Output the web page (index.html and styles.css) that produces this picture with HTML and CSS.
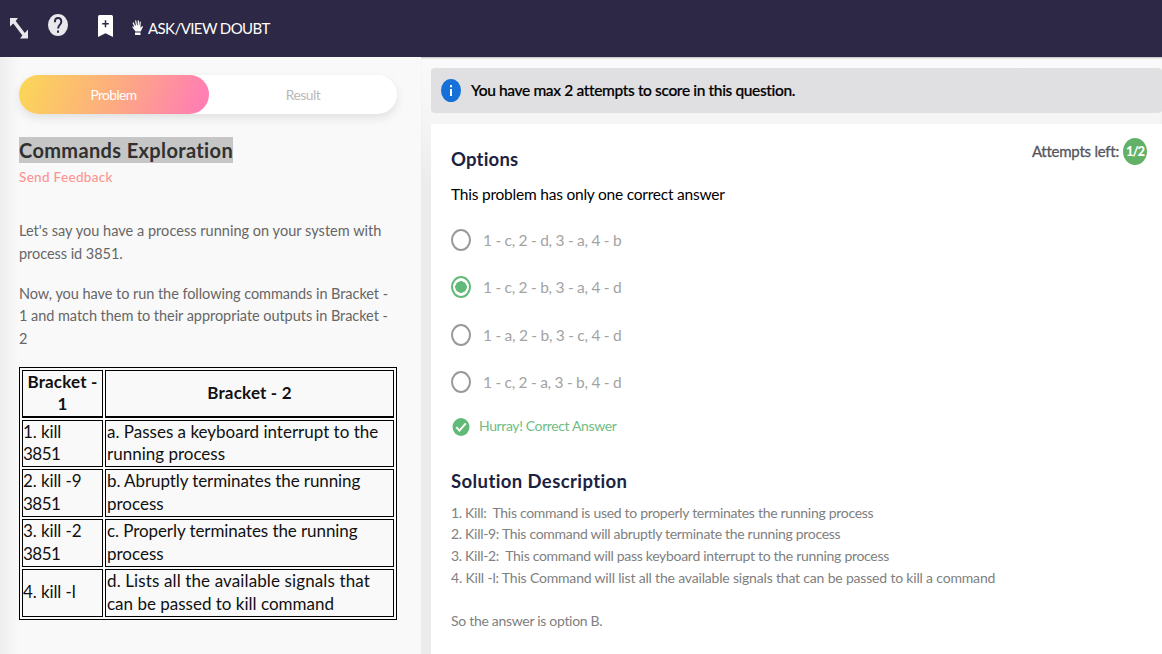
FILE: index.html
```
<!DOCTYPE html>
<html lang="en">
<head>
<meta charset="utf-8">
<title>Commands Exploration</title>
<link rel="stylesheet" href="styles.css">
</head>
<body>
<header class="topbar">
  <svg class="icon-resize" viewBox="0 0 18 21"><path d="M0 0h8L5.700 3 14.800 14.900 18 11.500v9h-8l2.400-3L3.300 5.600 0 8.500z" fill="#e9e8ed"/></svg>
  <svg class="icon-help" viewBox="0 0 20 22"><ellipse cx="10" cy="11" rx="10" ry="11" fill="#e9e8ed"/><path d="M6.900 8.200C6.900 5.500 8.200 4.100 10 4.100s3.300 1.500 3.300 3.700c0 2.900-3.200 3.400-3.200 6.600" fill="none" stroke="#2c2845" stroke-width="2"/><path d="M9 16.500h2v2.200H9z" fill="#2c2845"/></svg>
  <svg class="icon-bookmark" viewBox="0 0 15 22"><path d="M1.500 0h12Q15 0 15 1.700V22l-7.500-3.700L0 22V1.700Q0 0 1.500 0z" fill="#fff"/><path d="M7.500 5.200v7M4.200 8.700h6.600" stroke="#2c2845" stroke-width="1.500"/></svg>
  <svg class="icon-hand" viewBox="0 0 11 15"><path d="M3 7L1.300 3M4.700 6.500L3.700 1M6.300 6.500V.8M7.700 7.500l.5-5.300" stroke="#fff" stroke-width="1.250" stroke-linecap="round"/><path d="M2.300 5.500l6-.2v2.700l2-2 .7.800-2.300 4.700H3.500L.2 7l.7-.8 1.700 1.300zM3 12.400h5.500V15H3z" fill="#fff"/></svg>
  <span class="doubt">ASK/VIEW DOUBT</span>
</header>
<main class="workspace">
  <section class="problem">
    <nav class="tabs">
      <div class="tab tab-active">Problem</div>
      <div class="tab">Result</div>
    </nav>
    <h1 class="title"><span class="selected">Commands Exploration</span></h1>
    <a class="feedback">Send Feedback</a>
    <p class="statement"><span class="lead">Let's say you have a process running on your system with</span><br>process id 3851.</p>
    <p class="statement">Now, you have to run the following commands in Bracket -<br>1 and match them to their appropriate outputs in Bracket -<br>2</p>
    <table class="brackets">
      <tr><th class="col-key">Bracket -<br>1</th><th>Bracket - 2</th></tr>
      <tr class="short"><td class="key">1. kill<br><span class="pid">3851</span></td><td>a. Passes a keyboard interrupt to the<br>running process</td></tr>
      <tr><td class="key">2. kill -9<br><span class="pid">3851</span></td><td><span class="snug">b. Abruptly terminates the running</span><br>process</td></tr>
      <tr><td class="key">3. kill -2<br><span class="pid">3851</span></td><td><span class="snug">c. Properly terminates the running</span><br>process</td></tr>
      <tr><td class="key">4. kill -l</td><td><span class="loose">d. Lists all the available signals that</span><br>can be passed to kill command</td></tr>
    </table>
  </section>
  <section class="answer">
    <div class="notice">
      <svg class="icon-info" viewBox="0 0 20 23"><ellipse cx="10" cy="11.500" rx="10" ry="11.500" fill="#1570d8"/><path d="M9 6h2v2.300H9zM9 10h2v7H9z" fill="#fff"/></svg>
      <span class="notice-text">You have max 2 attempts to score in this question.</span>
    </div>
    <div class="card">
      <div class="card-head">
        <h2 class="heading">Options</h2>
        <div class="attempts"><span class="attempts-label">Attempts left:</span><span class="badge">1/2</span></div>
      </div>
      <p class="hint">This problem has only one correct answer</p>
      <ul class="options">
        <li class="option"><span class="radio"></span><span>1 - c, 2 - d, 3 - a, 4 - b</span></li>
        <li class="option"><span class="radio radio-on"></span><span>1 - c, 2 - b, 3 - a, 4 - d</span></li>
        <li class="option"><span class="radio"></span><span>1 - a, 2 - b, 3 - c, 4 - d</span></li>
        <li class="option"><span class="radio"></span><span>1 - c, 2 - a, 3 - b, 4 - d</span></li>
      </ul>
      <div class="verdict">
        <svg class="icon-check" viewBox="0 0 18 18"><ellipse cx="9" cy="9" rx="8.500" ry="9" fill="#62ba78"/><path d="M4.300 9.200l3.100 3.400 6.400-7.200" fill="none" stroke="#fff" stroke-width="1.900"/></svg>
        <span class="verdict-text">Hurray! Correct Answer</span>
      </div>
      <h2 class="heading heading-solution">Solution Description</h2>
      <div class="solution">
        <div>1. Kill:&nbsp; This command is used to properly terminates the running process</div>
        <div>2. Kill-9: This command will abruptly terminate the running process</div>
        <div>3. Kill-2:&nbsp; This command will pass keyboard interrupt to the running process</div>
        <div class="wide">4. Kill -l: This Command will list all the available signals that can be passed to kill a command</div>
        <div class="conclusion">So the answer is option B.</div>
      </div>
    </div>
  </section>
</main>
</body>
</html>
```
FILE: styles.css
```
* { box-sizing: border-box; }
body {
  margin: 0;
  height: 654px;
  overflow: hidden;
  display: flex;
  flex-direction: column;
  font-family: Lato, "Open Sans", sans-serif;
  background: #f9f9f9;
}
h1, h2, p, ul { margin: 0; padding: 0; }
svg { display: block; flex: none; }

.topbar {
  height: 57px;
  flex: none;
  display: flex;
  align-items: flex-start;
  padding-left: 10px;
  background: #2c2845;
}
.icon-resize { width: 18px; height: 21px; margin-top: 18px; }
.icon-help { width: 20px; height: 22px; margin: 14px 0 0 20px; }
.icon-bookmark { width: 15px; height: 22px; margin: 15px 0 0 30px; }
.icon-hand { width: 11px; height: 15px; margin: 20px 0 0 19px; }
.doubt { margin: 18px 0 0 5px; font-size: 15px; line-height: 20px; letter-spacing: -.6px; color: #fff; white-space: nowrap; }

.workspace { flex: 1; display: flex; min-height: 0; }
.problem {
  width: 421px;
  flex: none;
  padding: 18px 24px 0 19px;
  background: linear-gradient(90deg, #eeeeee 0, #f9f9f9 19px);
}
.tabs {
  display: flex;
  height: 39px;
  border-radius: 20px;
  background: #fff;
  box-shadow: 0 4px 10px rgba(0, 0, 0, .1);
}
.tab {
  width: 188px;
  text-align: center;
  font-size: 13.800px;
  line-height: 40px;
  letter-spacing: -.45px;
  color: #b9b9b9;
}
.tab-active {
  width: 190px;
  padding-right: 1px;
  color: #fff;
  letter-spacing: -.6px;
  border-radius: 20px;
  background: linear-gradient(110deg, #fbd856 0%, #fdac80 50%, #ff7fb2 94%);
}
.title { margin-top: 23px; height: 26px; font-size: 20px; line-height: 26px; letter-spacing: .36px; color: #303030; }
.selected { display: inline-block; width: 214px; height: 26px; background: #c6c6c6; white-space: nowrap; }
.feedback { display: block; margin: 4px 0 33px; font-size: 13.500px; line-height: 20px; letter-spacing: .32px; font-weight: 500; color: #fe9492; }
.statement { font-size: 14.500px; line-height: 22.500px; letter-spacing: -.05px; color: #666; margin-bottom: 17.500px; white-space: nowrap; }
.lead { letter-spacing: .03px; }
.brackets {
  width: 378px;
  height: 253px;
  margin-top: -1px;
  table-layout: fixed;
  border: 1px solid #000;
  border-spacing: 2px;
  font-size: 17px;
  line-height: 22.500px;
  color: #111;
  white-space: nowrap;
}
.brackets th, .brackets td { border: 1px solid #000; padding: 0 1px; height: 48px; }
.brackets th { letter-spacing: .18px; border-bottom-width: 2px; }
.brackets .short td { height: 47px; }
.brackets .key { padding-left: 0; letter-spacing: -.1px; }
.col-key { width: 81px; }
.brackets .pid { letter-spacing: -.5px; }
.snug { letter-spacing: -.08px; }
.loose { letter-spacing: .12px; }

.answer {
  flex: 1;
  min-width: 0;
  padding: 11px 0 0 10px;
  background: linear-gradient(180deg, #fafafa 0, #f5f5f5 60px, #ececec 130px);
  box-shadow: inset 0 2px 2px -1px rgba(0, 0, 0, .25);
}
.notice {
  height: 45px;
  display: flex;
  align-items: center;
  gap: 10px;
  padding-left: 10px;
  border-radius: 4px;
  background: #e0e0e2;
  font-size: 15.500px;
  font-weight: 500;
  letter-spacing: -.36px;
  color: #000;
  -webkit-text-stroke: .2px #000;
}
.notice-text, .verdict-text { margin-bottom: 2px; }
.icon-info { width: 20px; height: 23px; }
.card { margin-top: 11px; height: 530px; padding: 14px 15px 0 20px; background: #fff; }
.card-head { display: flex; justify-content: space-between; height: 44px; }
.heading { font-size: 18.500px; line-height: 24px; letter-spacing: .2px; color: #1b2341; }
.card-head .heading { margin-top: 9px; }
.attempts { display: flex; gap: 4px; height: 27px; align-items: center; font-size: 15px; letter-spacing: -.24px; color: #55555d; }
.attempts-label { margin-bottom: 2px; -webkit-text-stroke: .3px #55555d; }
.badge {
  width: 24px;
  height: 27px;
  border-radius: 50%;
  background: #62b166;
  color: #fff;
  font-size: 13px;
  font-weight: 900;
  line-height: 27px;
  text-align: center;
  letter-spacing: -1px;
}
.hint { margin-top: 2px; font-size: 15.500px; line-height: 20px; letter-spacing: -.22px; color: #000; }
.options { list-style: none; margin-top: 12px; }
.option { height: 47.500px; display: flex; align-items: center; gap: 12px; font-size: 15.500px; letter-spacing: -.28px; color: #a3a3a3; }
.radio { width: 20px; height: 22px; border: 2px solid #999; border-radius: 50%; }
.radio-on { border-color: #62ba78; background: radial-gradient(circle closest-side, #62ba78 5.500px, #fff 6px); background-position: center; }
.verdict { display: flex; align-items: center; gap: 9px; padding-left: 1px; margin-top: 10.600px; height: 20px; font-size: 14px; letter-spacing: -.38px; color: #70bd83; }
.icon-check { width: 18px; height: 18px; }
.heading-solution { margin-top: 32px; letter-spacing: .4px; }
.solution { margin-top: 9px; font-size: 14px; line-height: 21.700px; letter-spacing: -.3px; color: #808080; white-space: nowrap; }
.wide { letter-spacing: -.18px; }
.conclusion { margin-top: 21.500px; }
```
